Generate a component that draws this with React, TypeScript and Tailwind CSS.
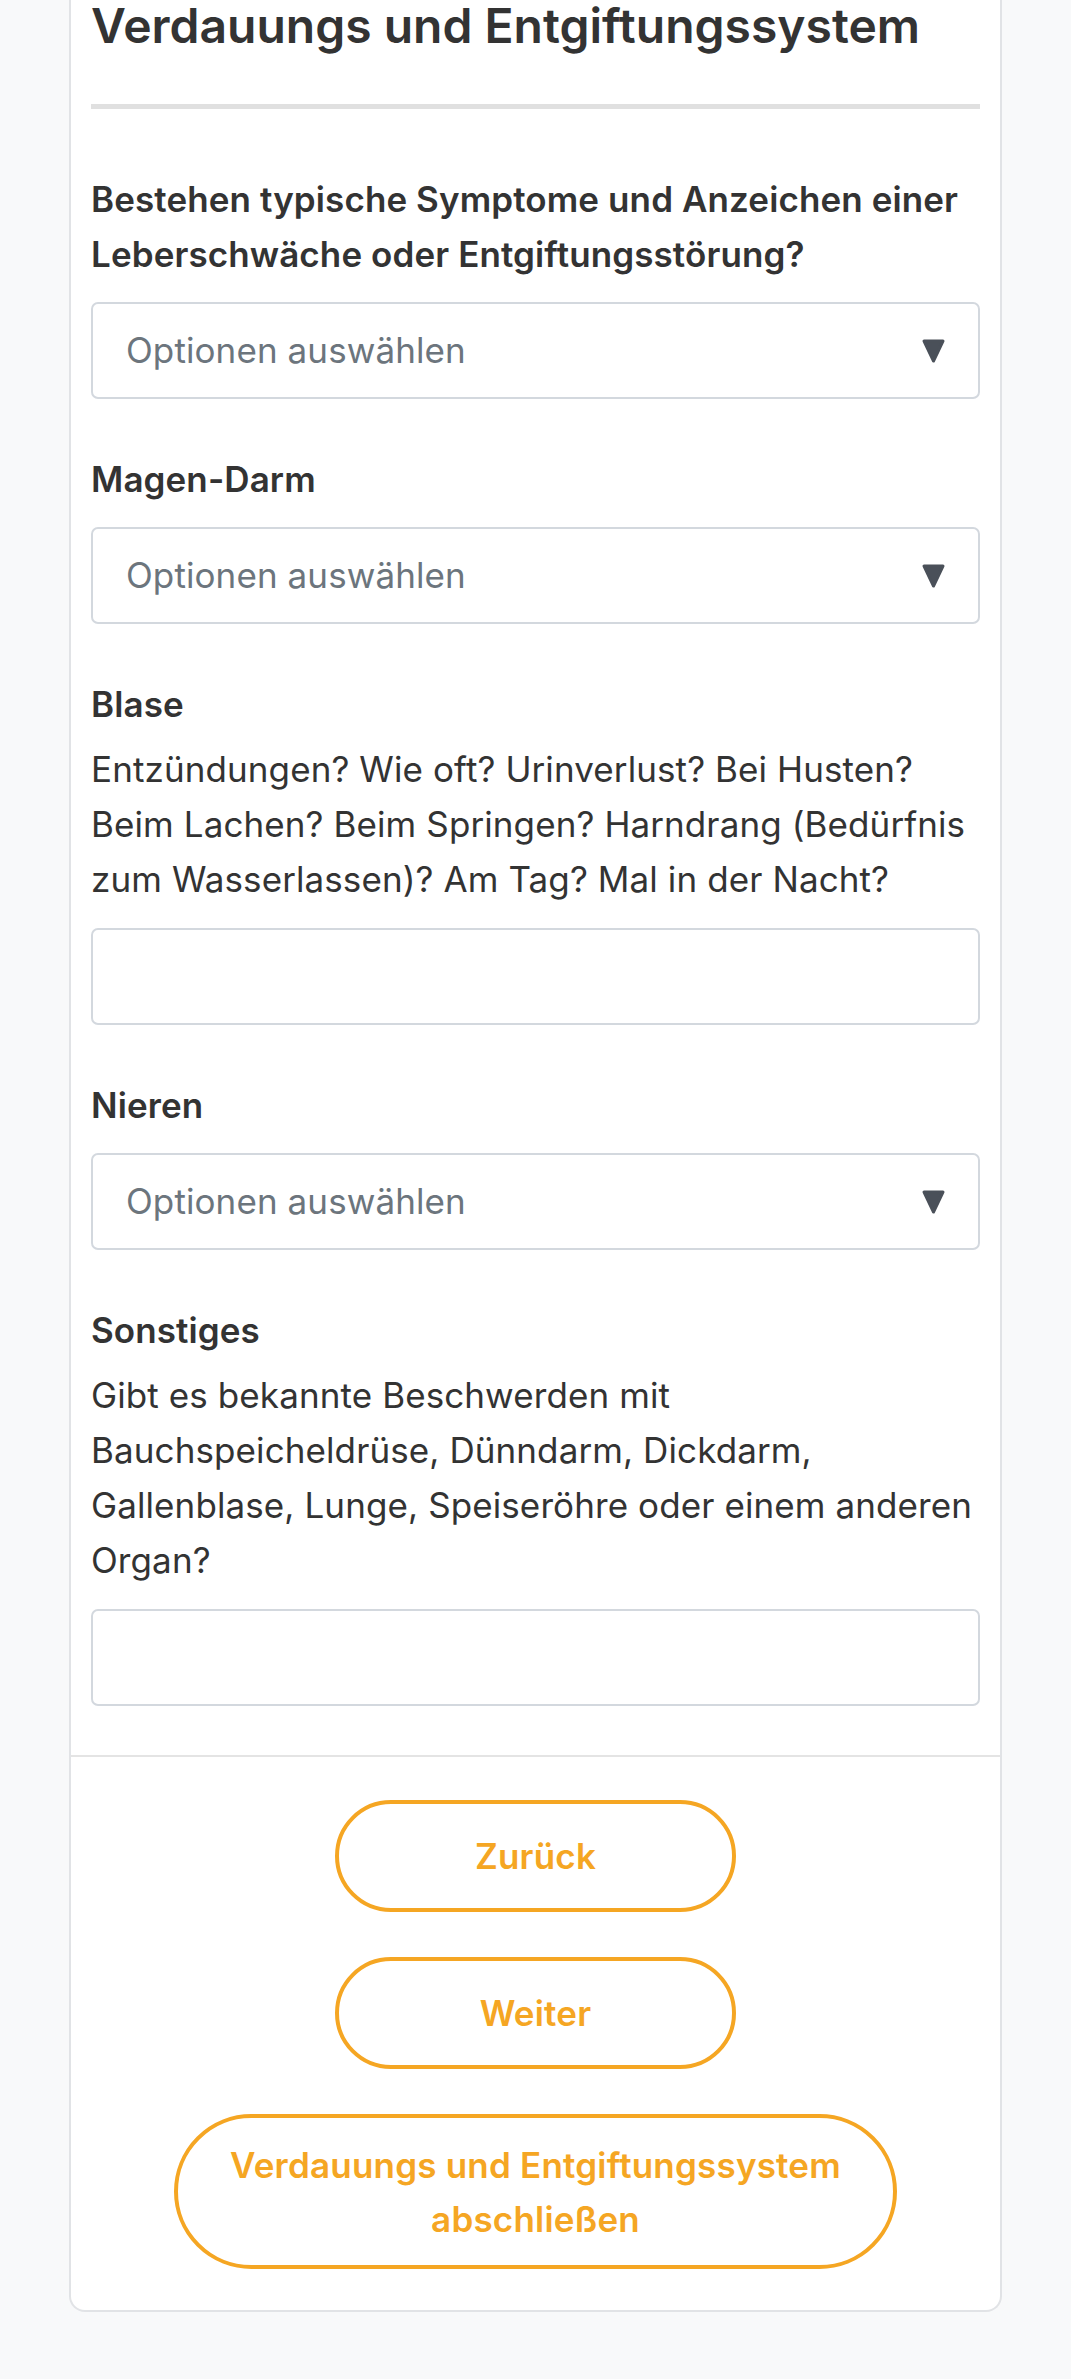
import { useState } from 'react';

type Field =
    | { kind: 'select'; label: string; hint?: string }
    | { kind: 'text'; label: string; hint?: string };

const fields: Field[] = [
    {
        kind: 'select',
        label: 'Bestehen typische Symptome und Anzeichen einer Leberschwäche oder Entgiftungsstörung?',
    },
    { kind: 'select', label: 'Magen-Darm' },
    {
        kind: 'text',
        label: 'Blase',
        hint: 'Entzündungen? Wie oft? Urinverlust? Bei Husten? Beim Lachen? Beim Springen? Harndrang (Bedürfnis zum Wasserlassen)? Am Tag? Mal in der Nacht?',
    },
    { kind: 'select', label: 'Nieren' },
    {
        kind: 'text',
        label: 'Sonstiges',
        hint: 'Gibt es bekannte Beschwerden mit Bauchspeicheldrüse, Dünndarm, Dickdarm, Gallenblase, Lunge, Speiseröhre oder einem anderen Organ?',
    },
];

function SelectBox() {
    return (
        <button
            type="button"
            className="flex h-[97px] w-full items-center justify-between rounded-[7px] border-2 border-[#d3d8de] bg-white pl-[33px] pr-[33px] text-left text-[#6c757d]"
        >
            <span className="text-[35px] leading-[55px] tracking-[0.1px]">Optionen auswählen</span>
            <svg width="23" height="24" viewBox="0 0 23 24" className="shrink-0">
                <polygon
                    points="2,2 21,2 11.5,22"
                    fill="#4a5059"
                    stroke="#4a5059"
                    strokeWidth="3"
                    strokeLinejoin="round"
                />
            </svg>
        </button>
    );
}

function TextBox() {
    const [value, setValue] = useState('');
    return (
        <input
            type="text"
            value={value}
            onChange={(e) => setValue(e.target.value)}
            className="block h-[97px] w-full rounded-[7px] border-2 border-[#d3d8de] bg-white px-[33px] text-[35px] text-[#333] outline-none"
        />
    );
}

function PillButton({ children, wide = false }: { children: React.ReactNode; wide?: boolean }) {
    return (
        <button
            type="button"
            className={
                wide
                    ? 'h-[155px] w-[723px] rounded-full border-4 border-[#f5a623] bg-white px-[40px] text-[35px] font-semibold leading-[54px] tracking-[0.2px] text-[#f5a623]'
                    : 'h-[112px] w-[401px] rounded-full border-4 border-[#f5a623] bg-white text-[35px] font-semibold leading-[54px] tracking-[0.2px] text-[#f5a623]'
            }
        >
            {children}
        </button>
    );
}

export default function App() {
    return (
        <div className="min-h-screen bg-[#f8f9fa] px-[69px] font-['Inter','Liberation_Sans',sans-serif] text-[#333]">
            <div className="rounded-b-[16px] border-2 border-t-0 border-[#e1e3e6] bg-white">
                <div className="px-[20px] pb-[49px]">
                    <h2 className="text-[48px] font-semibold leading-[51px] text-[#333]">
                        Verdauungs und Entgiftungssystem
                    </h2>
                    <div className="mt-[53px] h-[5px] bg-[#e0e0e0]" />

                    <div className="mt-[63px] flex flex-col gap-[53px]">
                        {fields.map((f) => (
                            <div key={f.label}>
                                <label className="block text-[35px] font-semibold leading-[55px] tracking-[0.1px]">
                                    {f.label}
                                </label>
                                {f.hint && (
                                    <p className="mt-[10px] text-[35px] leading-[55px] tracking-[0.1px]">{f.hint}</p>
                                )}
                                <div className={f.hint ? 'mt-[21px]' : 'mt-[20px]'}>
                                    {f.kind === 'select' ? <SelectBox /> : <TextBox />}
                                </div>
                            </div>
                        ))}
                    </div>
                </div>

                <div className="flex flex-col items-center gap-[45px] border-t-2 border-[#e4e4e4] pb-[41px] pt-[43px]">
                    <PillButton>Zurück</PillButton>
                    <PillButton>Weiter</PillButton>
                    <PillButton wide>Verdauungs und Entgiftungssystem abschließen</PillButton>
                </div>
            </div>

            {/* top edge of the next section card */}
            <div className="mt-[68px] h-[24px] rounded-t-[16px] border-2 border-b-0 border-[#e1e3e6] bg-white" />
        </div>
    );
}
